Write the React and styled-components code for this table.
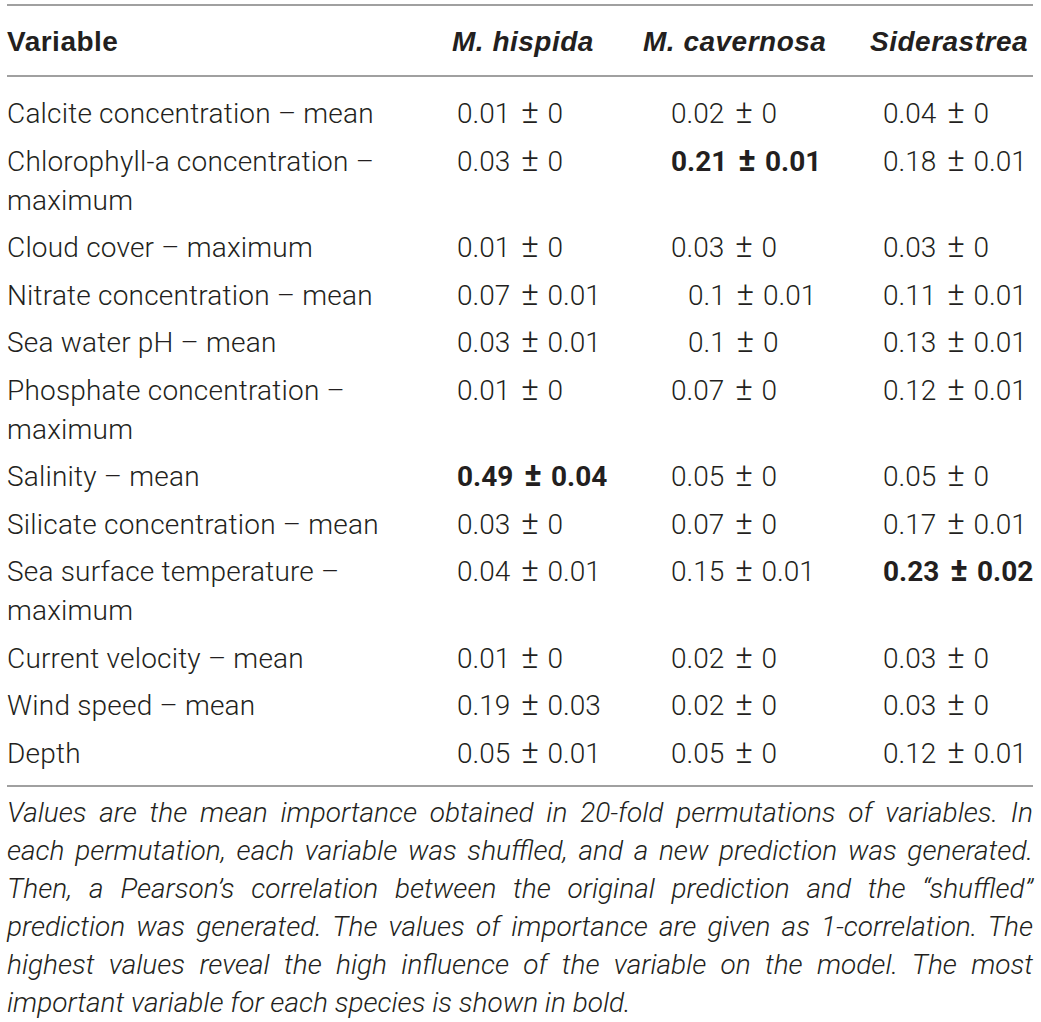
import React from "react";
import styled, { createGlobalStyle } from "styled-components";

const GlobalStyle = createGlobalStyle`
  html, body {
    margin: 0;
    padding: 0;
    background: #ffffff;
  }
  body {
    font-family: Roboto, "Liberation Sans", Arial, sans-serif;
    color: #231f20;
  }
`;

const RULE = "2px solid #a0a0a0";
const COLUMNS = "445px 191px 227px 163px";

const Page = styled.div`
  width: 1026px;
  padding: 4px 0 0 7px;
`;

const HeadRow = styled.div`
  display: grid;
  grid-template-columns: ${COLUMNS};
  border-top: ${RULE};
  border-bottom: ${RULE};
`;

const HeadCell = styled.div`
  padding: 16px 0 14px 0;
  font-family: "Liberation Sans", Arial, sans-serif;
  font-size: 28px;
  line-height: 39px;
  font-weight: 700;
  font-style: ${(props) => (props.italic ? "italic" : "normal")};
  letter-spacing: 0.5px;
  white-space: nowrap;
`;

const Body = styled.div`
  padding: 13px 0 8px 0;
  border-bottom: ${RULE};
`;

const Row = styled.div`
  display: grid;
  grid-template-columns: ${COLUMNS};
`;

const Label = styled.div`
  padding: 4px 20px 4.5px 0;
  font-size: 28px;
  line-height: 39px;
  font-weight: 300;
  letter-spacing: 0.2px;
`;

const Value = styled.div`
  padding: 4px 0 4.5px ${(props) => props.indent}px;
  font-size: 28px;
  line-height: 39px;
  font-weight: ${(props) => (props.bold ? 700 : 300)};
  white-space: nowrap;
`;

const Pm = styled.span`
  margin: 0 2px 0 4px;
  font-size: 33px;
  line-height: 0;
`;

const Note = styled.div`
  margin-top: 7px;
  width: 1026px;
  font-size: 28px;
  line-height: 38px;
  font-weight: 300;
  font-style: italic;
`;

const NoteLine = styled.div`
  text-align: justify;
  text-align-last: ${(props) => (props.last ? "left" : "justify")};
  white-space: nowrap;
`;

const INDENTS = [5, 28, 13];

const rows = [
  ["Calcite concentration – mean", "0.01 ± 0", "0.02 ± 0", "0.04 ± 0"],
  ["Chlorophyll-a concentration – maximum", "0.03 ± 0", "*0.21 ± 0.01", "0.18 ± 0.01"],
  ["Cloud cover – maximum", "0.01 ± 0", "0.03 ± 0", "0.03 ± 0"],
  ["Nitrate concentration – mean", "0.07 ± 0.01", "~0.1 ± 0.01", "0.11 ± 0.01"],
  ["Sea water pH – mean", "0.03 ± 0.01", "~0.1 ± 0", "0.13 ± 0.01"],
  ["Phosphate concentration – maximum", "0.01 ± 0", "0.07 ± 0", "0.12 ± 0.01"],
  ["Salinity – mean", "*0.49 ± 0.04", "0.05 ± 0", "0.05 ± 0"],
  ["Silicate concentration – mean", "0.03 ± 0", "0.07 ± 0", "0.17 ± 0.01"],
  ["Sea surface temperature – maximum", "0.04 ± 0.01", "0.15 ± 0.01", "*0.23 ± 0.02"],
  ["Current velocity – mean", "0.01 ± 0", "0.02 ± 0", "0.03 ± 0"],
  ["Wind speed – mean", "0.19 ± 0.03", "0.02 ± 0", "0.03 ± 0"],
  ["Depth", "0.05 ± 0.01", "0.05 ± 0", "0.12 ± 0.01"],
];

const noteLines = [
  "Values are the mean importance obtained in 20-fold permutations of variables. In",
  "each permutation, each variable was shuffled, and a new prediction was generated.",
  "Then, a Pearson’s correlation between the original prediction and the “shuffled”",
  "prediction was generated. The values of importance are given as 1-correlation. The",
  "highest values reveal the high influence of the variable on the model. The most",
  "important variable for each species is shown in bold.",
];

// "*" marks the bold (most important) value, "~" the values set a bit further in
const renderValue = (raw, col) => {
  const bold = raw.startsWith("*");
  const shifted = raw.startsWith("~");
  const text = bold || shifted ? raw.slice(1) : raw;
  const [mean, sd] = text.split(" ± ");
  return (
    <Value key={col} bold={bold} indent={INDENTS[col] + (shifted ? 17 : 0)}>
      {mean} <Pm>±</Pm> {sd}
    </Value>
  );
};

export default function App() {
  return (
    <Page>
      <GlobalStyle />
      <HeadRow>
        <HeadCell>Variable</HeadCell>
        <HeadCell italic>M. hispida</HeadCell>
        <HeadCell italic>M. cavernosa</HeadCell>
        <HeadCell italic>Siderastrea</HeadCell>
      </HeadRow>
      <Body>
        {rows.map(([label, ...values]) => (
          <Row key={label}>
            <Label>{label}</Label>
            {values.map((v, i) => renderValue(v, i))}
          </Row>
        ))}
      </Body>
      <Note>
        {noteLines.map((line, i) => (
          <NoteLine key={i} last={i === noteLines.length - 1}>
            {line}
          </NoteLine>
        ))}
      </Note>
    </Page>
  );
}
